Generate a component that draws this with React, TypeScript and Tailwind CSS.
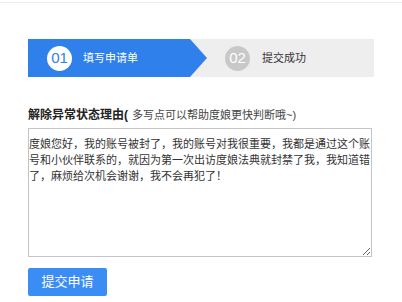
import { useState } from 'react';

const cn = '"Liberation Sans", "Noto Sans CJK SC", sans-serif';

export default function App() {
  const [reason, setReason] = useState(
    '度娘您好，我的账号被封了，我的账号对我很重要，我都是通过这个账号和小伙伴联系的，就因为第一次出访度娘法典就封禁了我，我知道错了，麻烦给次机会谢谢，我不会再犯了！'
  );

  return (
    <div className="w-[402px] h-[302px] bg-white overflow-hidden" style={{ fontFamily: cn }}>
      <div className="h-[3px] border-b border-[#ececec]" />

      <div className="px-[28px]">
        {/* steps */}
        <div className="mt-[36px] flex h-[38px] bg-[#eeeeee]">
          <div className="flex w-[179px] items-center bg-[#2f80ea] pl-[19px] [clip-path:polygon(0_0,162px_0,100%_50%,162px_100%,0_100%)]">
            <span className="flex h-[25px] w-[25px] items-center justify-center rounded-full bg-white text-[15px] text-[#2f80ea]">
              01
            </span>
            <span className="ml-[11px] text-[11px] text-white">填写申请单</span>
          </div>
          <div className="flex items-center pl-[18px]">
            <span className="flex h-[25px] w-[25px] items-center justify-center rounded-full bg-[#c8c8c8] text-[15px] text-white">
              02
            </span>
            <span className="ml-[12px] text-[11px] text-[#333]">提交成功</span>
          </div>
        </div>

        {/* form */}
        <div className="mt-[30px] text-[12px] leading-[16px] text-[#222]">
          <span className="font-bold">解除异常状态理由(</span>
          <span className="ml-[4px] text-[11px] text-[#444]">多写点可以帮助度娘更快判断哦~)</span>
        </div>
        <textarea
          value={reason}
          onChange={(e) => setReason(e.target.value)}
          className="mt-[5px] block h-[129px] w-[344px] border border-[#c4c4c4] px-0 pt-[7px] text-[11px] leading-[16px] text-[#333] outline-none"
          style={{ fontFamily: cn }}
        />
        <button className="mt-[11px] h-[28px] w-[79px] rounded-[2px] bg-[#3b8df6] text-[13px] text-white">
          提交申请
        </button>
      </div>
    </div>
  );
}
